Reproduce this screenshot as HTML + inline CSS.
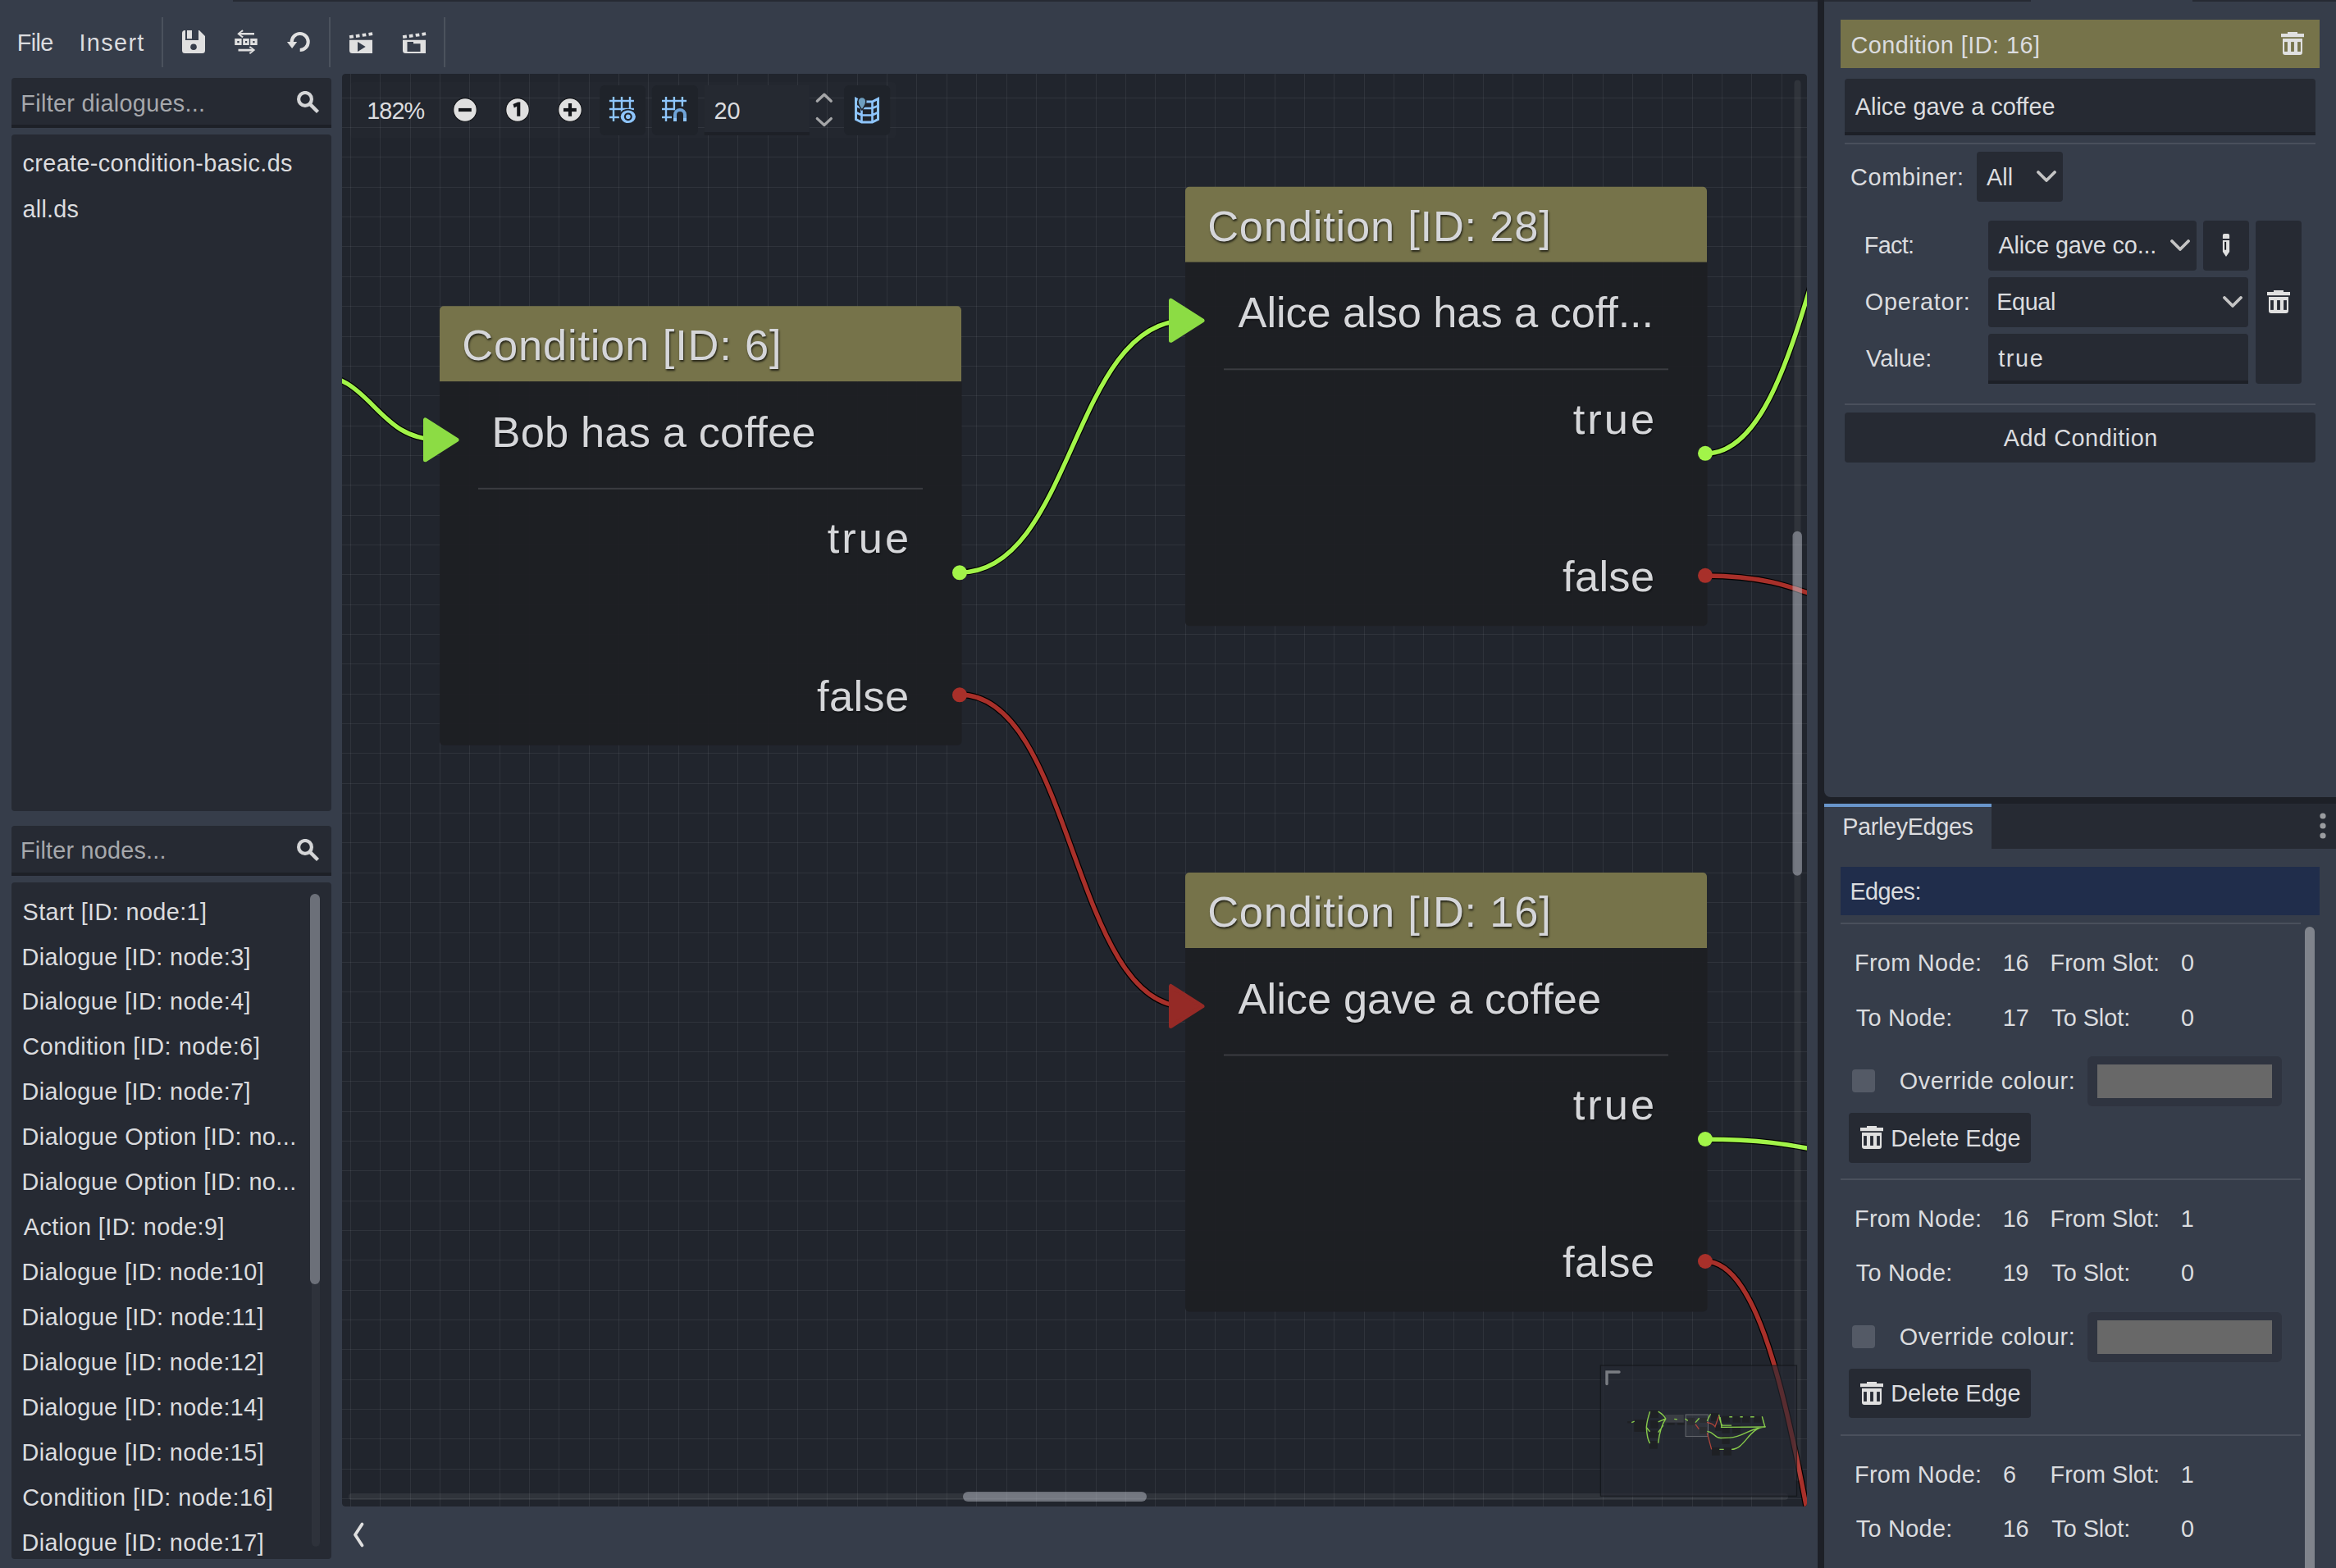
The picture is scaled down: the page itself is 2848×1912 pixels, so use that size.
<!DOCTYPE html><html><head><meta charset="utf-8"><style>
html,body{margin:0;padding:0;width:2848px;height:1912px;overflow:hidden;background:#363d4a;}
.a{position:absolute;}
.t{position:absolute;line-height:1;white-space:pre;font-family:"Liberation Sans",sans-serif;}
</style></head><body>
<div class="a" style="left:284px;top:0px;width:2192px;height:2px;background:#262a33;"></div>
<div class="a" style="left:2673px;top:0px;width:175px;height:2px;background:#262a33;"></div>
<div class="t" style="left:20.75px;top:37.78px;font-size:28.840px;letter-spacing:-0.667px;color:#dbdcdf;">File</div>
<div class="t" style="left:96.50px;top:37.78px;font-size:28.840px;letter-spacing:1.350px;color:#dbdcdf;">Insert</div>
<div class="a" style="left:197px;top:21px;width:2px;height:61px;background:#4b525d;"></div>
<div class="a" style="left:401px;top:21px;width:2px;height:61px;background:#4b525d;"></div>
<div class="a" style="left:541px;top:21px;width:2px;height:61px;background:#4b525d;"></div>
<svg class="a" style="left:220px;top:35px;" width="32" height="32" viewBox="0 0 32 32"><path fill="#e0e0e0" d="M5.5 2 H6 V14 H22 V2 H23 L30 9 V26.5 A3.5 3.5 0 0 1 26.5 30 H5.5 A3.5 3.5 0 0 1 2 26.5 V5.5 A3.5 3.5 0 0 1 5.5 2 Z M8 2 H14 V12.3 H8 Z"/><circle cx="16" cy="22.2" r="3.8" fill="#363d4a"/></svg>
<svg class="a" style="left:284px;top:35px;" width="32" height="32" viewBox="0 0 32 32"><g fill="#e0e0e0"><path d="M5.2 6.2 L11.4 1.3 L12.8 3 L9.3 5 H26 V7.6 H9.3 L12.8 9.6 L11.4 11.3 Z"/><path d="M2.2 12 H10.6 V20.1 H2.2 Z M5.3 15 V17.2 H7.6 V15 Z"/><path d="M12.2 12 H19.8 V20.1 H12.2 Z M15 15 V17.2 H17.2 V15 Z"/><path d="M21.2 12 H29.7 V20.1 H21.2 Z M24.3 15 V17.2 H26.5 V15 Z"/><path d="M27.2 26.1 L21 21.2 L19.6 22.9 L23.1 24.8 H6.5 V27.4 H23.1 L19.6 29.3 L21 31 Z"/></g></svg>
<svg class="a" style="left:346px;top:35px;" width="36" height="32" viewBox="0 0 36 32"><path d="M9.7 16 A10 10 0 1 1 19.7 26" fill="none" stroke="#e0e0e0" stroke-width="4.1"/><path d="M3.9 16 H16.2 L10.1 24 Z" fill="#e0e0e0"/></svg>
<svg class="a" style="left:425px;top:35px;" width="32" height="32" viewBox="0 0 32 32"><g fill="#e0e0e0"><path d="M1 13.8 H29 V30 H4.5 A3.5 3.5 0 0 1 1 26.5 Z"/><path d="M0.8 8.3 L5.6 7.6 L6.2 11.3 L1.4 12 Z M8.6 7.2 L13.2 6.6 L13.8 10.3 L9.2 10.9 Z M16.4 6.1 L21 5.5 L21.6 9.2 L17 9.8 Z M24.2 5 L28.8 4.3 L29.4 8 L24.8 8.7 Z"/></g><path d="M11 16 L20.7 22 L11 28 Z" fill="#363d4a"/></svg>
<svg class="a" style="left:489.5px;top:35px;" width="32" height="32" viewBox="0 0 32 32"><g fill="#e0e0e0"><path d="M1 13.8 H29 V30 H4.5 A3.5 3.5 0 0 1 1 26.5 Z"/><path d="M0.8 8.3 L5.6 7.6 L6.2 11.3 L1.4 12 Z M8.6 7.2 L13.2 6.6 L13.8 10.3 L9.2 10.9 Z M16.4 6.1 L21 5.5 L21.6 9.2 L17 9.8 Z M24.2 5 L28.8 4.3 L29.4 8 L24.8 8.7 Z"/></g><path d="M6.5 16 H14 V18.2 H22.5 V28 H6.5 Z" fill="#363d4a"/></svg>
<div class="a" style="left:14px;top:95px;width:390px;height:61px;background:#262a33;border-radius:4px 4px 0px 0px;"></div>
<div class="a" style="left:14px;top:152px;width:390px;height:4px;background:#1d2027;"></div>
<div class="t" style="left:25.35px;top:111.78px;font-size:28.840px;letter-spacing:0.292px;color:#a6a8ac;">Filter dialogues...</div>
<svg class="a" style="left:362px;top:111px;" width="28" height="28" viewBox="0 0 28 28"><circle cx="10" cy="9.9" r="7.9" fill="none" stroke="#d4d5d7" stroke-width="4.2"/><path d="M15.6 15.6 L25.5 25.5" stroke="#d4d5d7" stroke-width="4.4" stroke-linecap="butt"/></svg>
<div class="a" style="left:14px;top:164px;width:390px;height:825px;background:#262a33;border-radius:4px;"></div>
<div class="t" style="left:27.55px;top:185.48px;font-size:28.840px;letter-spacing:0.354px;color:#dbdcdf;">create-condition-basic.ds</div>
<div class="t" style="left:27.55px;top:240.58px;font-size:28.840px;letter-spacing:0.200px;color:#dbdcdf;">all.ds</div>
<div class="a" style="left:14px;top:1007px;width:390px;height:61px;background:#262a33;border-radius:4px 4px 0px 0px;"></div>
<div class="a" style="left:14px;top:1064px;width:390px;height:4px;background:#1d2027;"></div>
<div class="t" style="left:25.05px;top:1023.38px;font-size:28.840px;letter-spacing:0.196px;color:#a6a8ac;">Filter nodes...</div>
<svg class="a" style="left:362px;top:1023px;" width="28" height="28" viewBox="0 0 28 28"><circle cx="10" cy="9.9" r="7.9" fill="none" stroke="#d4d5d7" stroke-width="4.2"/><path d="M15.6 15.6 L25.5 25.5" stroke="#d4d5d7" stroke-width="4.4" stroke-linecap="butt"/></svg>
<div class="a" style="left:14px;top:1076px;width:390px;height:825px;background:#262a33;border-radius:4px;"></div>
<div class="t" style="left:27.55px;top:1097.63px;font-size:28.840px;letter-spacing:0.382px;color:#dbdcdf;">Start [ID: node:1]</div>
<div class="t" style="left:26.55px;top:1152.56px;font-size:28.840px;letter-spacing:0.412px;color:#dbdcdf;">Dialogue [ID: node:3]</div>
<div class="t" style="left:26.55px;top:1207.49px;font-size:28.840px;letter-spacing:0.412px;color:#dbdcdf;">Dialogue [ID: node:4]</div>
<div class="t" style="left:27.30px;top:1262.42px;font-size:28.840px;letter-spacing:0.512px;color:#dbdcdf;">Condition [ID: node:6]</div>
<div class="t" style="left:26.55px;top:1317.35px;font-size:28.840px;letter-spacing:0.412px;color:#dbdcdf;">Dialogue [ID: node:7]</div>
<div class="t" style="left:26.55px;top:1372.28px;font-size:28.840px;letter-spacing:0.440px;color:#dbdcdf;">Dialogue Option [ID: no...</div>
<div class="t" style="left:26.55px;top:1427.21px;font-size:28.840px;letter-spacing:0.440px;color:#dbdcdf;">Dialogue Option [ID: no...</div>
<div class="t" style="left:28.80px;top:1482.14px;font-size:28.840px;letter-spacing:0.417px;color:#dbdcdf;">Action [ID: node:9]</div>
<div class="t" style="left:26.55px;top:1537.07px;font-size:28.840px;letter-spacing:0.393px;color:#dbdcdf;">Dialogue [ID: node:10]</div>
<div class="t" style="left:26.55px;top:1592.00px;font-size:28.840px;letter-spacing:0.488px;color:#dbdcdf;">Dialogue [ID: node:11]</div>
<div class="t" style="left:26.55px;top:1646.93px;font-size:28.840px;letter-spacing:0.393px;color:#dbdcdf;">Dialogue [ID: node:12]</div>
<div class="t" style="left:26.55px;top:1701.86px;font-size:28.840px;letter-spacing:0.393px;color:#dbdcdf;">Dialogue [ID: node:14]</div>
<div class="t" style="left:26.55px;top:1756.79px;font-size:28.840px;letter-spacing:0.393px;color:#dbdcdf;">Dialogue [ID: node:15]</div>
<div class="t" style="left:27.30px;top:1811.72px;font-size:28.840px;letter-spacing:0.489px;color:#dbdcdf;">Condition [ID: node:16]</div>
<div class="t" style="left:26.55px;top:1866.65px;font-size:28.840px;letter-spacing:0.393px;color:#dbdcdf;">Dialogue [ID: node:17]</div>
<div class="a" style="left:380px;top:1090px;width:10px;height:796px;background:#2e323b;border-radius:5px;"></div>
<div class="a" style="left:378px;top:1090px;width:12px;height:476px;background:#6c7079;border-radius:6px;"></div>
<svg class="a" style="left:424px;top:1852px;" width="26" height="38" viewBox="0 0 26 38"><path d="M17.5 6.5 L9 19.5 L17.5 32.5" fill="none" stroke="#e0e0e0" stroke-width="3.8" stroke-linecap="round" stroke-linejoin="round"/></svg>
<svg class="a" style="left:417px;top:90px;overflow:hidden;border-radius:4px;" width="1786" height="1747" viewBox="0 0 1786 1747"><rect x="0" y="0" width="1786" height="1747" rx="4" fill="#21252d"/><path d="M10.5 0V1747M46.5 0V1747M83.5 0V1747M119.5 0V1747M155.5 0V1747M192.5 0V1747M228.5 0V1747M264.5 0V1747M301.5 0V1747M337.5 0V1747M373.5 0V1747M410.5 0V1747M446.5 0V1747M482.5 0V1747M519.5 0V1747M555.5 0V1747M591.5 0V1747M628.5 0V1747M664.5 0V1747M700.5 0V1747M737.5 0V1747M773.5 0V1747M810.5 0V1747M846.5 0V1747M882.5 0V1747M919.5 0V1747M955.5 0V1747M991.5 0V1747M1028.5 0V1747M1064.5 0V1747M1100.5 0V1747M1137.5 0V1747M1173.5 0V1747M1209.5 0V1747M1246.5 0V1747M1282.5 0V1747M1318.5 0V1747M1355.5 0V1747M1391.5 0V1747M1427.5 0V1747M1464.5 0V1747M1500.5 0V1747M1537.5 0V1747M1573.5 0V1747M1609.5 0V1747M1646.5 0V1747M1682.5 0V1747M1718.5 0V1747M1755.5 0V1747" stroke="rgba(255,255,255,0.068)" stroke-width="1" fill="none"/><path d="M0 29.5H1786M0 65.5H1786M0 101.5H1786M0 138.5H1786M0 174.5H1786M0 210.5H1786M0 247.5H1786M0 283.5H1786M0 320.5H1786M0 356.5H1786M0 392.5H1786M0 429.5H1786M0 465.5H1786M0 501.5H1786M0 538.5H1786M0 574.5H1786M0 610.5H1786M0 647.5H1786M0 683.5H1786M0 719.5H1786M0 756.5H1786M0 792.5H1786M0 828.5H1786M0 865.5H1786M0 901.5H1786M0 937.5H1786M0 974.5H1786M0 1010.5H1786M0 1047.5H1786M0 1083.5H1786M0 1119.5H1786M0 1156.5H1786M0 1192.5H1786M0 1228.5H1786M0 1265.5H1786M0 1301.5H1786M0 1337.5H1786M0 1374.5H1786M0 1410.5H1786M0 1446.5H1786M0 1483.5H1786M0 1519.5H1786M0 1555.5H1786M0 1592.5H1786M0 1628.5H1786M0 1664.5H1786M0 1701.5H1786M0 1737.5H1786" stroke="rgba(255,255,255,0.068)" stroke-width="1" fill="none"/></svg>
<svg class="a" style="left:0px;top:0px;pointer-events:none;" width="2848" height="1912" viewBox="0 0 2848 1912"><defs><clipPath id="gc"><rect x="417" y="90" width="1786" height="1747" rx="4"/></clipPath></defs><g clip-path="url(#gc)"><rect x="427" y="100" width="665" height="68.5" rx="4" fill="rgba(255,255,255,0.012)"/><path d="M541 373.3 h626 a5 5 0 0 1 5 5 v87 h-636 v-87 a5 5 0 0 1 5 -5 z" fill="#76734a"/><path d="M536 465.3 h636.5 v438.5 a5 5 0 0 1 -5 5 h-626.5 a5 5 0 0 1 -5 -5 z" fill="rgba(30,31,35,0.95)"/><rect x="583" y="594.8" width="542" height="2" fill="#3b3c41"/><path d="M1450 227.8 h626 a5 5 0 0 1 5 5 v87 h-636 v-87 a5 5 0 0 1 5 -5 z" fill="#76734a"/><path d="M1445 319.8 h636.5 v438.5 a5 5 0 0 1 -5 5 h-626.5 a5 5 0 0 1 -5 -5 z" fill="rgba(30,31,35,0.95)"/><rect x="1492" y="449.3" width="542" height="2" fill="#3b3c41"/><path d="M1450 1064 h626 a5 5 0 0 1 5 5 v87 h-636 v-87 a5 5 0 0 1 5 -5 z" fill="#76734a"/><path d="M1445 1156 h636.5 v438.5 a5 5 0 0 1 -5 5 h-626.5 a5 5 0 0 1 -5 -5 z" fill="rgba(30,31,35,0.95)"/><rect x="1492" y="1285.5" width="542" height="2" fill="#3b3c41"/><path d="M376.20 455.40 C456.10 455.40 456.10 536.25 536.00 536.25" stroke="#000" stroke-width="7.8" fill="none"/><path d="M376.20 455.40 C456.10 455.40 456.10 536.25 536.00 536.25" stroke="#a2f449" stroke-width="5.4" fill="none"/><path d="M1170.00 698.00 C1307.50 698.00 1307.50 391.00 1445.00 391.00" stroke="#000" stroke-width="7.8" fill="none"/><path d="M1170.00 698.00 C1307.50 698.00 1307.50 391.00 1445.00 391.00" stroke="#a2f449" stroke-width="5.4" fill="none"/><path d="M1170.00 847.00 C1307.50 847.00 1307.50 1227.30 1445.00 1227.30" stroke="#000" stroke-width="7.8" fill="none"/><path d="M1170.00 847.00 C1307.50 847.00 1307.50 1227.30 1445.00 1227.30" stroke="#a8302a" stroke-width="5.4" fill="none"/><path d="M2078.50 553.20 C2216.25 553.20 2216.25 84.50 2354.00 84.50" stroke="#000" stroke-width="7.8" fill="none"/><path d="M2078.50 553.20 C2216.25 553.20 2216.25 84.50 2354.00 84.50" stroke="#a2f449" stroke-width="5.4" fill="none"/><path d="M2078.50 702.00 C2216.25 702.00 2216.25 752.90 2354.00 752.90" stroke="#000" stroke-width="7.8" fill="none"/><path d="M2078.50 702.00 C2216.25 702.00 2216.25 752.90 2354.00 752.90" stroke="#a8302a" stroke-width="5.4" fill="none"/><path d="M2078.50 1389.30 C2216.25 1389.30 2216.25 1415.70 2354.00 1415.70" stroke="#000" stroke-width="7.8" fill="none"/><path d="M2078.50 1389.30 C2216.25 1389.30 2216.25 1415.70 2354.00 1415.70" stroke="#a2f449" stroke-width="5.4" fill="none"/><path d="M2078.50 1538.00 C2216.25 1538.00 2216.25 2286.00 2354.00 2286.00" stroke="#000" stroke-width="7.8" fill="none"/><path d="M2078.50 1538.00 C2216.25 1538.00 2216.25 2286.00 2354.00 2286.00" stroke="#a8302a" stroke-width="5.4" fill="none"/><circle cx="1170" cy="698.3" r="9" fill="#a2f449"/><circle cx="1170" cy="847.3" r="9" fill="#a8302a"/><circle cx="2079" cy="552.8" r="9" fill="#a2f449"/><circle cx="2079" cy="701.8" r="9" fill="#a8302a"/><circle cx="2079" cy="1389" r="9" fill="#a2f449"/><circle cx="2079" cy="1538" r="9" fill="#a8302a"/><path d="M518.5 511.8 L518.5 560.8 L557 536.3 Z" fill="#8cdc44" stroke="#8cdc44" stroke-width="5" stroke-linejoin="round"/><path d="M1427.5 366.3 L1427.5 415.3 L1466 390.8 Z" fill="#8cdc44" stroke="#8cdc44" stroke-width="5" stroke-linejoin="round"/><path d="M1427.5 1202.5 L1427.5 1251.5 L1466 1227 Z" fill="#952a26" stroke="#952a26" stroke-width="5" stroke-linejoin="round"/><rect x="2187.5" y="97.7" width="8" height="1708" rx="4" fill="rgba(255,255,255,0.07)"/><rect x="2185.5" y="647.7" width="11.5" height="420" rx="5.75" fill="rgba(200,205,215,0.45)"/><rect x="425" y="1821" width="1755" height="8" rx="4" fill="rgba(255,255,255,0.07)"/><rect x="1174" y="1819" width="224" height="12" rx="6" fill="rgba(200,205,215,0.45)"/><rect x="1951.3" y="1665" width="239.2" height="159.3" fill="rgba(38,42,51,0.62)" stroke="rgba(10,12,15,0.55)" stroke-width="1.2"/><rect x="1992.3" y="1731.2" width="14.3" height="14.6" fill="#1e2024"/><rect x="2012" y="1719.6" width="10" height="9.3" fill="#1e2024"/><rect x="2012" y="1732" width="10" height="9.6" fill="#1e2024"/><rect x="2010.8" y="1744.3" width="10" height="9.2" fill="#1e2024"/><rect x="2010.8" y="1757" width="10" height="9.6" fill="#1e2024"/><rect x="2032.4" y="1734.6" width="9.2" height="3.1" fill="#1e2024"/><rect x="2045" y="1734.6" width="9.3" height="3.1" fill="#1e2024"/><rect x="2057" y="1728.9" width="9.3" height="8.8" fill="#1e2024"/><rect x="2072" y="1728.9" width="9" height="6.1" fill="#1e2024"/><rect x="2072" y="1740" width="9" height="8.5" fill="#1e2024"/><rect x="2086" y="1723" width="9.6" height="9.7" fill="#1e2024"/><rect x="2091" y="1737.3" width="7.6" height="7.4" fill="#1e2024"/><rect x="2099.4" y="1726.6" width="9.3" height="8" fill="#1e2024"/><rect x="2112.5" y="1726.6" width="9.3" height="8" fill="#1e2024"/><rect x="2124" y="1726.6" width="9.3" height="8" fill="#1e2024"/><rect x="2138" y="1726.6" width="9.6" height="8" fill="#1e2024"/><rect x="2099.4" y="1740" width="9.3" height="7.7" fill="#1e2024"/><rect x="2112" y="1738" width="9.8" height="9.7" fill="#1e2024"/><rect x="2099.4" y="1751.2" width="9.3" height="9.6" fill="#1e2024"/><rect x="2087" y="1765" width="9.7" height="9.7" fill="#1e2024"/><rect x="2101.3" y="1765" width="9.7" height="9.7" fill="#1e2024"/><rect x="1984.2" y="1733" width="4.3" height="2.4" fill="#1e2024"/><rect x="2030.1" y="1725" width="22.7" height="9.6" fill="#3a3d43"/><rect x="2055.1" y="1725" width="27.4" height="26.6" fill="rgba(255,255,255,0.06)" stroke="#686b71" stroke-width="1"/><path d="M1989.2 1734.6L1992.7 1733.1 M2011.6 1721.2 Q2008 1732 2007.3 1740.4 Q2009 1743 2011.6 1745.8 M2007.3 1740.4 Q2008 1755 2011.6 1760 M2021.6 1721.2 Q2028 1725 2030.8 1730 Q2024 1740 2021.6 1759.7 M2021.6 1733.9 L2030.8 1730 M2021.6 1746.6 L2027.8 1738.1 M2041.2 1730.4L2044.7 1730.8 M2054.3 1730L2057.8 1732.3 M2067 1734.6L2071.7 1729.3 M2081.3 1732.7L2085.5 1724.2 M2095.6 1725 Q2098 1738 2100.2 1738.1 L2111 1738.1 M2097 1728 L2099 1740 M2108.3 1727.7H2112.1 M2121.4 1727.7H2124.8 M2134.1 1727.7H2138.7 M2148.3 1727.3L2151.8 1740 M2097.9 1740.4L2152.6 1740 M2081.3 1745.4 C2090 1746 2090 1753.5 2097.9 1753.5 L2108.7 1753.1 C2125 1753 2135 1740 2152.6 1740 M2096.3 1767.4H2101.7 M2111 1767.4 C2128 1767 2132 1740 2152.6 1740" fill="none" stroke="#86c94a" stroke-width="1.4"/><path d="M2067 1736.6L2071.3 1742.7 M2081 1734.3 Q2089 1736 2091 1739.7 L2095.6 1726.6 M2081.3 1747.4 L2086.7 1767.4" fill="none" stroke="#b0453a" stroke-width="1.3"/><path d="M1959 1687.5 V1673 H1974" fill="none" stroke="#7a7d83" stroke-width="3.4" stroke-linecap="round"/></g></svg>
<div class="t" style="left:563.20px;top:395.06px;font-size:52.489px;letter-spacing:0.828px;color:#d5d6d9;text-shadow:1px 2px 2.5px rgba(0,0,0,0.7);">Condition [ID: 6]</div>
<div class="t" style="left:599.55px;top:500.86px;font-size:52.489px;letter-spacing:0.133px;color:#d5d6d9;text-shadow:1px 1.5px 1.5px rgba(0,0,0,0.35);">Bob has a coffee</div>
<div class="t" style="left:1008.75px;top:630.06px;font-size:52.489px;letter-spacing:3.000px;color:#d5d6d9;text-shadow:1px 1.5px 1.5px rgba(0,0,0,0.35);">true</div>
<div class="t" style="left:996.00px;top:822.76px;font-size:52.489px;letter-spacing:0.312px;color:#d5d6d9;text-shadow:1px 1.5px 1.5px rgba(0,0,0,0.35);">false</div>
<div class="t" style="left:1472.20px;top:249.56px;font-size:52.489px;letter-spacing:0.779px;color:#d5d6d9;text-shadow:1px 2px 2.5px rgba(0,0,0,0.7);">Condition [ID: 28]</div>
<div class="t" style="left:1509.50px;top:355.36px;font-size:52.489px;letter-spacing:-0.120px;color:#d5d6d9;text-shadow:1px 1.5px 1.5px rgba(0,0,0,0.35);">Alice also has a coff...</div>
<div class="t" style="left:1917.75px;top:484.56px;font-size:52.489px;letter-spacing:3.000px;color:#d5d6d9;text-shadow:1px 1.5px 1.5px rgba(0,0,0,0.35);">true</div>
<div class="t" style="left:1905.00px;top:677.26px;font-size:52.489px;letter-spacing:0.312px;color:#d5d6d9;text-shadow:1px 1.5px 1.5px rgba(0,0,0,0.35);">false</div>
<div class="t" style="left:1472.20px;top:1085.76px;font-size:52.489px;letter-spacing:0.779px;color:#d5d6d9;text-shadow:1px 2px 2.5px rgba(0,0,0,0.7);">Condition [ID: 16]</div>
<div class="t" style="left:1509.50px;top:1191.56px;font-size:52.489px;letter-spacing:0.014px;color:#d5d6d9;text-shadow:1px 1.5px 1.5px rgba(0,0,0,0.35);">Alice gave a coffee</div>
<div class="t" style="left:1917.75px;top:1320.76px;font-size:52.489px;letter-spacing:3.000px;color:#d5d6d9;text-shadow:1px 1.5px 1.5px rgba(0,0,0,0.35);">true</div>
<div class="t" style="left:1905.00px;top:1513.46px;font-size:52.489px;letter-spacing:0.312px;color:#d5d6d9;text-shadow:1px 1.5px 1.5px rgba(0,0,0,0.35);">false</div>
<svg class="a" style="left:0px;top:0px;pointer-events:none;" width="2848" height="1912" viewBox="0 0 2848 1912"><circle cx="567" cy="134" r="14.3" fill="#e0e0e0" stroke="#15171b" stroke-width="1.2"/><rect x="559" y="131.9" width="15.8" height="4.2" fill="#15171b"/><circle cx="631" cy="134" r="14.3" fill="#e0e0e0" stroke="#15171b" stroke-width="1.2"/><path d="M625.5 127 L631.5 124.5 H634.3 V141.8 H630.2 V129.8 L626.8 131.5 Z" fill="#15171b"/><circle cx="695" cy="134" r="14.3" fill="#e0e0e0" stroke="#15171b" stroke-width="1.2"/><rect x="687" y="131.9" width="15.8" height="4.2" fill="#15171b"/><rect x="692.9" y="126" width="4.2" height="15.8" fill="#15171b"/><rect x="731.2" y="104" width="55.8" height="61" rx="6" fill="#1f232a"/><rect x="794.8" y="104" width="56.2" height="61" rx="6" fill="#1f232a"/><rect x="1029" y="104" width="56.2" height="61" rx="6" fill="#1f232a"/><rect x="858.8" y="104" width="128" height="60.5" fill="#252931"/><rect x="858.8" y="161" width="128" height="4" fill="#1d2027"/><rect x="746.8" y="118" width="2.4" height="30" fill="#8ec5fc"/><rect x="756.8" y="118" width="2.4" height="30" fill="#8ec5fc"/><rect x="766.8" y="118" width="2.4" height="30" fill="#8ec5fc"/><rect x="742.9" y="121.8" width="30" height="2.4" fill="#8ec5fc"/><rect x="742.9" y="131.8" width="30" height="2.4" fill="#8ec5fc"/><rect x="742.9" y="141.8" width="30" height="2.4" fill="#8ec5fc"/><ellipse cx="765.8" cy="142.3" rx="11" ry="9.6" fill="#1f232a"/><ellipse cx="765.8" cy="142.3" rx="9.1" ry="7.8" fill="#8ec5fc"/><circle cx="765.8" cy="142.3" r="4.9" fill="#1f232a"/><circle cx="765.8" cy="142.3" r="2.8" fill="#8ec5fc"/><rect x="810.8" y="118" width="2.4" height="30" fill="#8ec5fc"/><rect x="820.7" y="118" width="2.4" height="16.2" fill="#8ec5fc"/><rect x="830.7" y="118" width="2.4" height="11.8" fill="#8ec5fc"/><rect x="807" y="121.8" width="30" height="2.4" fill="#8ec5fc"/><rect x="807" y="131.8" width="16" height="2.4" fill="#8ec5fc"/><rect x="807" y="141.8" width="12" height="2.4" fill="#8ec5fc"/><path d="M823 148 V140 A6 6 0 0 1 835 140 V148" fill="none" stroke="#6fa3d8" stroke-width="4"/><rect x="821" y="144" width="4" height="4" fill="#8ec5fc"/><rect x="833" y="144" width="4" height="4" fill="#8ec5fc"/><path d="M996.3 123.2 L1004.9 115.3 L1013.3 123.2 M996.3 144.6 L1004.9 152.5 L1013.3 144.6" fill="none" stroke="#a5a6a8" stroke-width="3.3" stroke-linecap="round" stroke-linejoin="round"/><path d="M1043.5 120.5 V145.5 L1050.5 149 H1063.5 L1070.5 145.5 V120.5 L1063.5 124 H1050.5 Z" fill="none" stroke="#8ec5fc" stroke-width="3"/><path d="M1050.5 124 V149 M1063.5 124 V149 M1043.5 129 L1050.5 132 H1063.5 L1070.5 129 M1043.5 137 L1050.5 140.5 H1063.5 L1070.5 137" fill="none" stroke="#8ec5fc" stroke-width="2.6"/><path d="M1050.9 134 C1047 129 1046 126 1046 123.4 A4.9 4.9 0 0 1 1055.8 123.4 C1055.8 126 1054.8 129 1050.9 134 Z" fill="#6f9fbf" stroke="#1f232a" stroke-width="1.5"/></svg>
<div class="t" style="left:447.25px;top:120.63px;font-size:28.840px;letter-spacing:-0.917px;color:#dbdcdf;">182%</div>
<div class="t" style="left:870.50px;top:120.98px;font-size:28.840px;letter-spacing:0.000px;color:#dbdcdf;">20</div>
<div class="a" style="left:2216px;top:0px;width:8px;height:1912px;background:#1d2027;"></div>
<div class="a" style="left:2224px;top:972px;width:624px;height:8px;background:#1d2027;"></div>
<svg class="a" style="left:2224px;top:964px;" width="8" height="8" viewBox="0 0 8 8"><path d="M0 0 V8 H8 A8 8 0 0 1 0 0 Z" fill="#1d2027"/></svg>
<div class="a" style="left:2244px;top:24px;width:584px;height:59px;background:#76734a;"></div>
<div class="t" style="left:2256.40px;top:40.58px;font-size:28.840px;letter-spacing:0.456px;color:#dbdcdf;">Condition [ID: 16]</div>
<svg class="a" style="left:2780.5px;top:38.5px;" width="28" height="28" viewBox="0 0 28 28"><g fill="#e0e0e0"><rect x="8" y="0" width="12" height="2.2"/><rect x="0" y="2" width="28" height="4.2"/><path d="M2 8 H26 V25 A3 3 0 0 1 23 28 H5 A3 3 0 0 1 2 25 Z"/></g><g fill="#76734a"><rect x="4.1" y="12.1" width="3.8" height="11.8"/><rect x="12.1" y="12.1" width="3.8" height="11.8"/><rect x="20.1" y="12.1" width="3.8" height="11.8"/></g></svg>
<div class="a" style="left:2249px;top:96px;width:574px;height:69px;background:#262a33;border-radius:4px 4px 0px 0px;"></div>
<div class="a" style="left:2249px;top:161px;width:574px;height:4px;background:#1d2027;"></div>
<div class="t" style="left:2261.70px;top:115.58px;font-size:28.840px;letter-spacing:0.042px;color:#dbdcdf;">Alice gave a coffee</div>
<div class="a" style="left:2249px;top:173.5px;width:574px;height:2px;background:#4a505c;"></div>
<div class="t" style="left:2256.10px;top:202.08px;font-size:28.840px;letter-spacing:0.625px;color:#dbdcdf;">Combiner:</div>
<div class="a" style="left:2410px;top:185.3px;width:105px;height:60.5px;background:#262a33;border-radius:4px;"></div>
<div class="t" style="left:2422.00px;top:202.08px;font-size:28.840px;letter-spacing:0.000px;color:#dbdcdf;">All</div>
<svg class="a" style="left:2483px;top:207.5px;" width="24" height="14" viewBox="0 0 24 14"><path d="M2 2 L12 12 L22 2" fill="none" stroke="#c4c4c4" stroke-width="3.8" stroke-linecap="round" stroke-linejoin="round"/></svg>
<div class="t" style="left:2272.75px;top:285.38px;font-size:28.840px;letter-spacing:-0.688px;color:#dbdcdf;">Fact:</div>
<div class="t" style="left:2273.75px;top:353.88px;font-size:28.840px;letter-spacing:0.781px;color:#dbdcdf;">Operator:</div>
<div class="t" style="left:2275.00px;top:423.28px;font-size:28.840px;letter-spacing:0.150px;color:#dbdcdf;">Value:</div>
<div class="a" style="left:2424.3px;top:269px;width:253.5px;height:61px;background:#262a33;border-radius:4px;"></div>
<div class="t" style="left:2436.40px;top:285.38px;font-size:28.840px;letter-spacing:-0.167px;color:#dbdcdf;">Alice gave co...</div>
<svg class="a" style="left:2646px;top:292px;" width="24" height="14" viewBox="0 0 24 14"><path d="M2 2 L12 12 L22 2" fill="none" stroke="#c4c4c4" stroke-width="3.8" stroke-linecap="round" stroke-linejoin="round"/></svg>
<div class="a" style="left:2686px;top:269px;width:55.5px;height:61px;background:#262a33;border-radius:4px;"></div>
<svg class="a" style="left:2704px;top:282px;" width="20" height="34" viewBox="0 0 20 34"><path d="M5.9 9.1 V4.9 A2 2 0 0 1 7.9 2.9 H12.1 A2 2 0 0 1 14.1 4.9 V9.1 Z M5.9 10.9 H14.1 V25 L10 30.9 L5.9 25 Z" fill="#e0e0e0"/><rect x="8.2" y="12.9" width="1.9" height="9.8" fill="#15171c"/></svg>
<div class="a" style="left:2750px;top:269px;width:55.5px;height:198.6px;background:#262a33;border-radius:4px;"></div>
<svg class="a" style="left:2764px;top:354px;" width="28" height="28" viewBox="0 0 28 28"><g fill="#e0e0e0"><rect x="8" y="0" width="12" height="2.2"/><rect x="0" y="2" width="28" height="4.2"/><path d="M2 8 H26 V25 A3 3 0 0 1 23 28 H5 A3 3 0 0 1 2 25 Z"/></g><g fill="#262a33"><rect x="4.1" y="12.1" width="3.8" height="11.8"/><rect x="12.1" y="12.1" width="3.8" height="11.8"/><rect x="20.1" y="12.1" width="3.8" height="11.8"/></g></svg>
<div class="a" style="left:2424.3px;top:338px;width:317.2px;height:60.5px;background:#262a33;border-radius:4px;"></div>
<div class="t" style="left:2434.15px;top:353.88px;font-size:28.840px;letter-spacing:-0.375px;color:#dbdcdf;">Equal</div>
<svg class="a" style="left:2710px;top:361px;" width="24" height="14" viewBox="0 0 24 14"><path d="M2 2 L12 12 L22 2" fill="none" stroke="#c4c4c4" stroke-width="3.8" stroke-linecap="round" stroke-linejoin="round"/></svg>
<div class="a" style="left:2424.3px;top:407px;width:317.2px;height:60.6px;background:#262a33;border-radius:4px 4px 0px 0px;"></div>
<div class="a" style="left:2424.3px;top:463.6px;width:317.2px;height:4px;background:#1d2027;"></div>
<div class="t" style="left:2436.15px;top:423.28px;font-size:28.840px;letter-spacing:1.667px;color:#dbdcdf;">true</div>
<div class="a" style="left:2249px;top:491.6px;width:574px;height:2px;background:#4a505c;"></div>
<div class="a" style="left:2249px;top:502.8px;width:574px;height:61px;background:#262a33;border-radius:4px;"></div>
<div class="t" style="left:2442.68px;top:519.78px;font-size:28.840px;letter-spacing:0.542px;color:#dbdcdf;">Add Condition</div>
<div class="a" style="left:2224px;top:980px;width:624px;height:55px;background:#262a33;"></div>
<div class="a" style="left:2224px;top:980px;width:204px;height:55px;background:#363d4a;"></div>
<div class="a" style="left:2224px;top:980px;width:204px;height:4px;background:#6996cc;"></div>
<div class="t" style="left:2246.25px;top:993.58px;font-size:28.840px;letter-spacing:-0.375px;color:#dbdcdf;">ParleyEdges</div>
<svg class="a" style="left:2824px;top:988px;" width="16" height="38" viewBox="0 0 16 38"><g fill="#9a9ca0"><circle cx="8" cy="7" r="3.6"/><circle cx="8" cy="19" r="3.6"/><circle cx="8" cy="31" r="3.6"/></g></svg>
<div class="a" style="left:2243.8px;top:1057px;width:583.9px;height:58.6px;background:#202d4b;"></div>
<div class="t" style="left:2255.45px;top:1072.58px;font-size:28.840px;letter-spacing:-0.550px;color:#dbdcdf;">Edges:</div>
<div class="a" style="left:2244px;top:1125px;width:561px;height:2px;background:#4a505c;"></div>
<div class="a" style="left:2810px;top:1130px;width:12px;height:792px;background:#80848c;border-radius:6px;"></div>
<div class="t" style="left:2260.95px;top:1160.28px;font-size:28.840px;letter-spacing:0.333px;color:#dbdcdf;">From Node:</div>
<div class="t" style="left:2441.75px;top:1160.28px;font-size:28.840px;letter-spacing:-0.250px;color:#dbdcdf;">16</div>
<div class="t" style="left:2499.55px;top:1160.28px;font-size:28.840px;letter-spacing:0.056px;color:#dbdcdf;">From Slot:</div>
<div class="t" style="left:2659.00px;top:1160.28px;font-size:28.840px;letter-spacing:0.000px;color:#dbdcdf;">0</div>
<div class="t" style="left:2262.70px;top:1226.58px;font-size:28.840px;letter-spacing:0.321px;color:#dbdcdf;">To Node:</div>
<div class="t" style="left:2441.75px;top:1226.58px;font-size:28.840px;letter-spacing:0.000px;color:#dbdcdf;">17</div>
<div class="t" style="left:2501.30px;top:1226.58px;font-size:28.840px;letter-spacing:-0.036px;color:#dbdcdf;">To Slot:</div>
<div class="t" style="left:2659.00px;top:1226.58px;font-size:28.840px;letter-spacing:0.000px;color:#dbdcdf;">0</div>
<div class="a" style="left:2257.7px;top:1303.8px;width:28.3px;height:28.2px;background:#545a66;border-radius:4px;"></div>
<div class="t" style="left:2315.75px;top:1304.38px;font-size:28.840px;letter-spacing:0.600px;color:#dbdcdf;">Override colour:</div>
<div class="a" style="left:2545.4px;top:1287.7px;width:236.3px;height:61.1px;background:#2f3440;border-radius:6px;"></div>
<div class="a" style="left:2557px;top:1298px;width:213px;height:41px;background:#686868;"></div>
<div class="a" style="left:2254px;top:1357px;width:221.5px;height:60.6px;background:#262a33;border-radius:4px;"></div>
<svg class="a" style="left:2268px;top:1373px;" width="28" height="28" viewBox="0 0 28 28"><g fill="#e0e0e0"><rect x="8" y="0" width="12" height="2.2"/><rect x="0" y="2" width="28" height="4.2"/><path d="M2 8 H26 V25 A3 3 0 0 1 23 28 H5 A3 3 0 0 1 2 25 Z"/></g><g fill="#262a33"><rect x="4.1" y="12.1" width="3.8" height="11.8"/><rect x="12.1" y="12.1" width="3.8" height="11.8"/><rect x="20.1" y="12.1" width="3.8" height="11.8"/></g></svg>
<div class="t" style="left:2305.35px;top:1373.58px;font-size:28.840px;letter-spacing:-0.050px;color:#dbdcdf;">Delete Edge</div>
<div class="a" style="left:2244px;top:1436.8px;width:561px;height:2px;background:#4a505c;"></div>
<div class="t" style="left:2260.95px;top:1472.18px;font-size:28.840px;letter-spacing:0.333px;color:#dbdcdf;">From Node:</div>
<div class="t" style="left:2441.75px;top:1472.18px;font-size:28.840px;letter-spacing:-0.250px;color:#dbdcdf;">16</div>
<div class="t" style="left:2499.55px;top:1472.18px;font-size:28.840px;letter-spacing:0.056px;color:#dbdcdf;">From Slot:</div>
<div class="t" style="left:2658.75px;top:1472.18px;font-size:28.840px;letter-spacing:0.000px;color:#dbdcdf;">1</div>
<div class="t" style="left:2262.70px;top:1538.48px;font-size:28.840px;letter-spacing:0.321px;color:#dbdcdf;">To Node:</div>
<div class="t" style="left:2441.75px;top:1538.48px;font-size:28.840px;letter-spacing:-0.500px;color:#dbdcdf;">19</div>
<div class="t" style="left:2501.30px;top:1538.48px;font-size:28.840px;letter-spacing:-0.036px;color:#dbdcdf;">To Slot:</div>
<div class="t" style="left:2659.00px;top:1538.48px;font-size:28.840px;letter-spacing:0.000px;color:#dbdcdf;">0</div>
<div class="a" style="left:2257.7px;top:1615.7px;width:28.3px;height:28.2px;background:#545a66;border-radius:4px;"></div>
<div class="t" style="left:2315.75px;top:1616.28px;font-size:28.840px;letter-spacing:0.600px;color:#dbdcdf;">Override colour:</div>
<div class="a" style="left:2545.4px;top:1599.6px;width:236.3px;height:61.1px;background:#2f3440;border-radius:6px;"></div>
<div class="a" style="left:2557px;top:1609.9px;width:213px;height:41px;background:#686868;"></div>
<div class="a" style="left:2254px;top:1668.9px;width:221.5px;height:60.6px;background:#262a33;border-radius:4px;"></div>
<svg class="a" style="left:2268px;top:1684.9px;" width="28" height="28" viewBox="0 0 28 28"><g fill="#e0e0e0"><rect x="8" y="0" width="12" height="2.2"/><rect x="0" y="2" width="28" height="4.2"/><path d="M2 8 H26 V25 A3 3 0 0 1 23 28 H5 A3 3 0 0 1 2 25 Z"/></g><g fill="#262a33"><rect x="4.1" y="12.1" width="3.8" height="11.8"/><rect x="12.1" y="12.1" width="3.8" height="11.8"/><rect x="20.1" y="12.1" width="3.8" height="11.8"/></g></svg>
<div class="t" style="left:2305.35px;top:1685.48px;font-size:28.840px;letter-spacing:-0.050px;color:#dbdcdf;">Delete Edge</div>
<div class="a" style="left:2244px;top:1748.7px;width:561px;height:2px;background:#4a505c;"></div>
<div class="t" style="left:2260.95px;top:1784.08px;font-size:28.840px;letter-spacing:0.333px;color:#dbdcdf;">From Node:</div>
<div class="t" style="left:2442.00px;top:1784.08px;font-size:28.840px;letter-spacing:0.000px;color:#dbdcdf;">6</div>
<div class="t" style="left:2499.55px;top:1784.08px;font-size:28.840px;letter-spacing:0.056px;color:#dbdcdf;">From Slot:</div>
<div class="t" style="left:2658.75px;top:1784.08px;font-size:28.840px;letter-spacing:0.000px;color:#dbdcdf;">1</div>
<div class="t" style="left:2262.70px;top:1850.38px;font-size:28.840px;letter-spacing:0.321px;color:#dbdcdf;">To Node:</div>
<div class="t" style="left:2441.75px;top:1850.38px;font-size:28.840px;letter-spacing:-0.250px;color:#dbdcdf;">16</div>
<div class="t" style="left:2501.30px;top:1850.38px;font-size:28.840px;letter-spacing:-0.036px;color:#dbdcdf;">To Slot:</div>
<div class="t" style="left:2659.00px;top:1850.38px;font-size:28.840px;letter-spacing:0.000px;color:#dbdcdf;">0</div>
</body></html>
